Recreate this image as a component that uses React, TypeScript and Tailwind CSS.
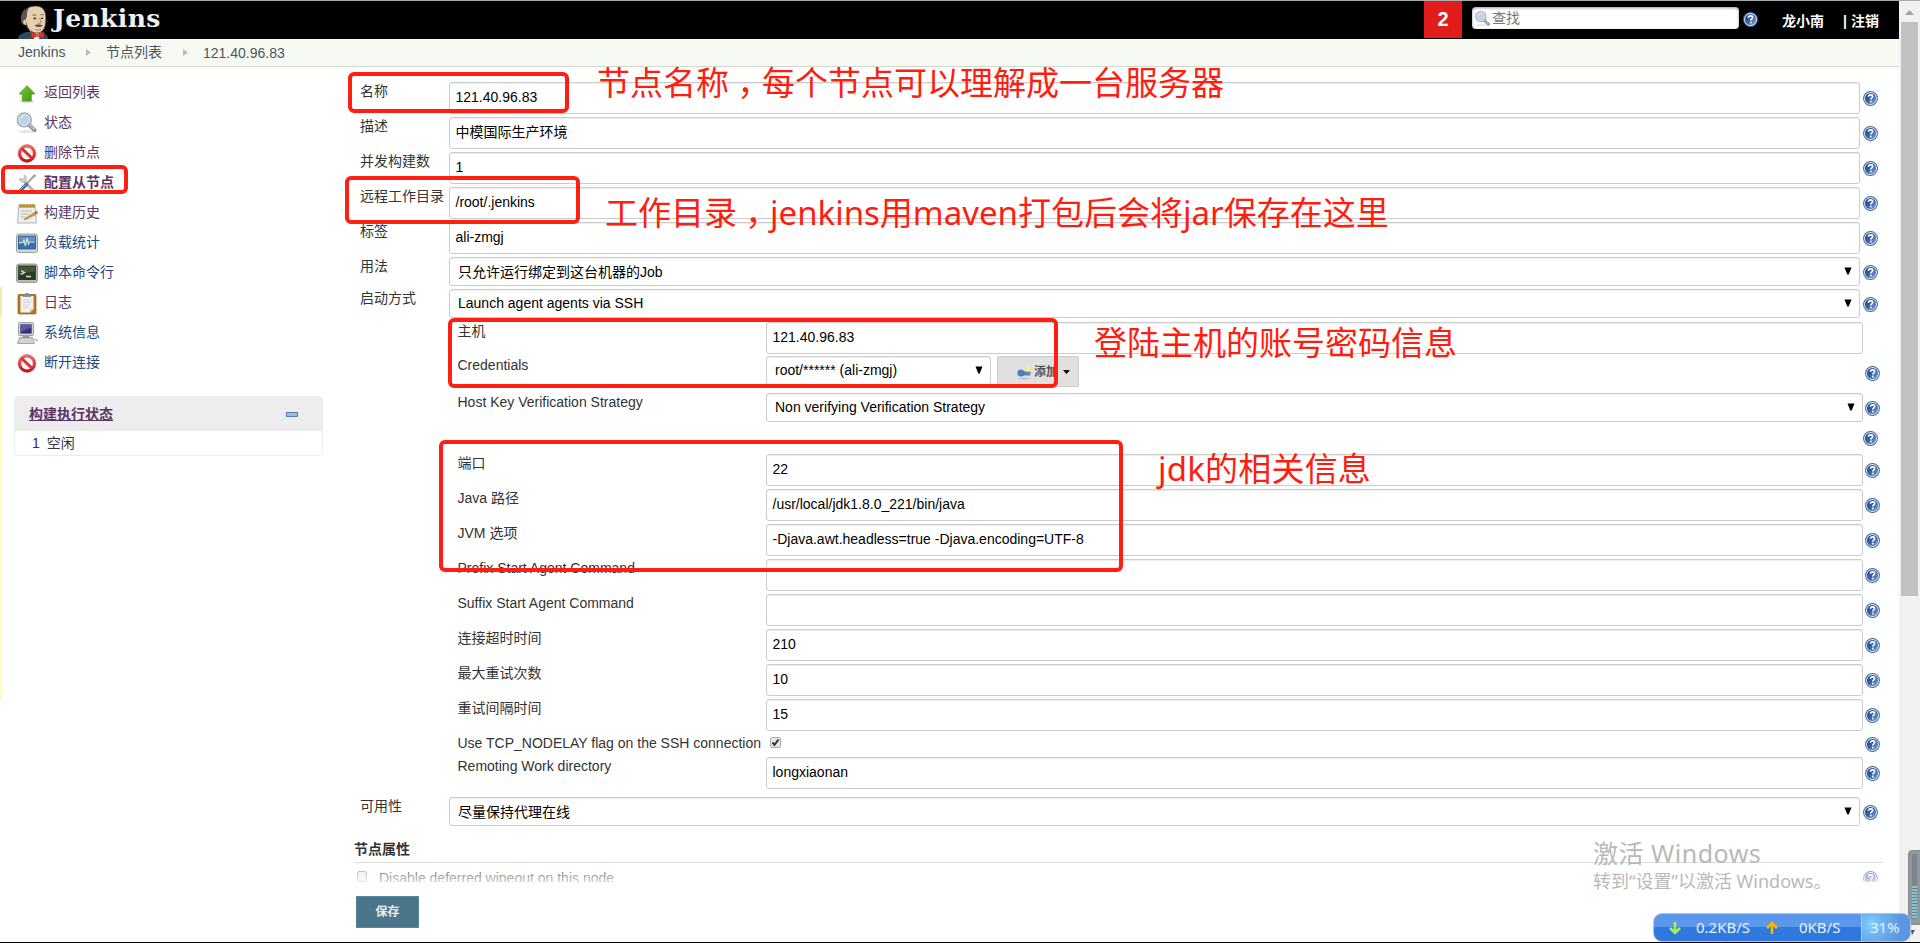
import React from "react";

type RowProps = {
  label?: string;
  height: string;
  nested?: boolean;
  help?: "none" | "text" | "select" | "cred" | "check";
  children?: React.ReactNode;
};

function Help() {
  return (
    <svg width="15" height="15" viewBox="0 0 16 16" className="block shrink-0">
      <defs>
        <linearGradient id="helpFill" x1="0" y1="0" x2="1" y2="1">
          <stop offset="0" stopColor="#1d4480" />
          <stop offset="0.5" stopColor="#3563a5" />
          <stop offset="1" stopColor="#86a9d8" />
        </linearGradient>
      </defs>
      <circle cx="8" cy="8" r="7.9" fill="#3f66a2" />
      <circle cx="8" cy="8" r="6.9" fill="#dfe8f4" />
      <circle cx="8" cy="8" r="5.9" fill="url(#helpFill)" />
      <path d="M5.8 6.2C5.9 4.7 6.9 4.1 8.1 4.1c1.3 0 2.2.7 2.2 1.8 0 1.5-2 1.6-2 3.2" fill="none" stroke="#fff" strokeWidth="1.7" />
      <rect x="7.4" y="10.3" width="1.8" height="1.8" fill="#fff" />
    </svg>
  );
}

const helpTop = {
  none: "",
  text: "pt-[9px]",
  select: "pt-[8px]",
  cred: "pt-[10px]",
  check: "pt-[3px]",
};

function Row({ label, height, nested, help = "text", children }: RowProps) {
  return (
    <div className={`flex items-start ${height} ${nested ? "pl-[97.500px]" : ""}`}>
      <div className={`shrink-0 whitespace-nowrap leading-[18px] text-[#333] ${nested ? "w-[308.500px]" : "w-[89px]"}`}>{label}</div>
      <div className={`flex shrink-0 ${nested ? "w-[1097px]" : "w-[1411px]"}`}>{children}</div>
      {help !== "none" && (
        <div className={`${nested ? "pl-[2px]" : "pl-[3px]"} ${helpTop[help]}`}>
          <Help />
        </div>
      )}
    </div>
  );
}

function Input({ value }: { value: string }) {
  return (
    <div className="h-[32px] flex-1 rounded-[3px] border border-[#ccc] bg-white px-[5.5px] leading-[29px] whitespace-pre text-black shadow-[inset_0_1px_1px_rgba(0,0,0,0.075)]">
      {value}
    </div>
  );
}

function Select({ value, small, leading = "leading-[29px]" }: { value: string; small?: boolean; leading?: string }) {
  return (
    <div
      className={`flex h-[29px] items-start justify-between rounded-[3px] border border-[#ccc] bg-white pr-[7px] pl-[8px] text-black shadow-[inset_0_1px_1px_rgba(0,0,0,0.075)] ${leading} ${small ? "w-[225px]" : "flex-1"}`}
    >
      <span>{value}</span>
      <svg width="8" height="8" viewBox="0 0 8 8" className="mt-[9px]">
        <path d="M0.5 0.5h7L4.7 7.5H3.3z" fill="#000" />
      </svg>
    </div>
  );
}

function Magnifier({ size }: { size: number }) {
  return (
    <svg width={size} height={size} viewBox="0 0 24 24">
      <ellipse cx="12" cy="21.5" rx="9" ry="1.6" fill="#000" opacity=".1" />
      <path d="M14.5 14.5l6 5.5" stroke="#8a8c88" strokeWidth="4" strokeLinecap="round" />
      <path d="M15.5 15l4.6 4.2" stroke="#c3c5c1" strokeWidth="1.6" strokeLinecap="round" />
      <circle cx="9.7" cy="9.3" r="7" fill="#b9d3f2" stroke="#a9aba8" strokeWidth="2" />
      <circle cx="9.7" cy="9.3" r="5.8" fill="none" stroke="#e7f0fa" strokeWidth="1" />
      <path d="M5.5 8.5c.5-2.500 2.500-3.800 5-3.500-2 .6-3.500 1.800-5 3.500z" fill="#fff" />
    </svg>
  );
}

function NoEntry() {
  return (
    <svg width="24" height="24" viewBox="0 0 24 24">
      <defs>
        <linearGradient id="noEntry" x1="0" y1="0" x2="0" y2="1">
          <stop offset="0" stopColor="#ea6a6a" />
          <stop offset="1" stopColor="#cc1414" />
        </linearGradient>
      </defs>
      <circle cx="12" cy="12.500" r="7.400" fill="#f6f6f6" stroke="url(#noEntry)" strokeWidth="3" />
      <path d="M6.800 7.500l10.500 10" stroke="#d93030" strokeWidth="3" />
      <circle cx="12" cy="12.500" r="9" fill="none" stroke="#b81414" strokeWidth=".5" opacity=".6" />
    </svg>
  );
}

const icons: Record<string, React.ReactNode> = {
  up: (
    <svg width="24" height="24" viewBox="0 0 24 24">
      <defs>
        <linearGradient id="upFill" x1="0" y1="0" x2="1" y2="1">
          <stop offset="0" stopColor="#7ccb3a" />
          <stop offset="1" stopColor="#3f9410" />
        </linearGradient>
      </defs>
      <ellipse cx="12" cy="20.500" rx="7.500" ry="1.500" fill="#000" opacity=".15" />
      <path d="M12 4.500L20 13h-3.700v7H7.200v-7H4z" fill="url(#upFill)" stroke="#4c9a1c" strokeWidth=".7" />
    </svg>
  ),
  search: <Magnifier size={23} />,
  no: <NoEntry />,
  tools: (
    <svg width="24" height="24" viewBox="0 0 24 24">
      <path d="M8 9l10.500 11" stroke="#b4b6b3" strokeWidth="3.200" strokeLinecap="round" />
      <path d="M4.300 7.200c0 2.700 2 4.300 4.300 3.900 2-.3 3.200-2 2.900-4-.2-1.700-1.200-2.900-2.700-3.300L9.700 6.800 7.400 8.300z" fill="#d0d2cf" stroke="#a9aba8" strokeWidth=".6" />
      <path d="M19.800 4L11.500 13" stroke="#a3a5a2" strokeWidth="2" />
      <path d="M20.500 3.500l-2.300 1.200-1 1.500 1.200 1 2-1.300 1-2z" fill="#8faacb" />
      <path d="M11.300 13.500L5 20" stroke="#3f6fae" strokeWidth="3.400" strokeLinecap="round" />
      <path d="M10.500 13.500L5 19" stroke="#8fb2df" strokeWidth="1" />
    </svg>
  ),
  note: (
    <svg width="24" height="24" viewBox="0 0 24 24">
      <path d="M4 4h16l1.300 18H2.500z" fill="#eeeeec" stroke="#aaa" strokeWidth=".9" />
      <path d="M4 3.500h16v3.300H4z" fill="#c2a434" />
      <path d="M6 3.500v2M9 3.500v2M12 3.500v2M15 3.500v2M18 3.500v2" stroke="#765e10" strokeWidth=".7" />
      <path d="M6 10h11M6 13h8M5.500 16h5" stroke="#b8b8b6" />
      <path d="M10 17.500l9.500-6 1.500 1.800-9.300 4.800-2.700.6z" fill="#e0a23a" stroke="#99671c" strokeWidth=".6" />
      <path d="M19.200 11.600l2.300-1.800 1.800 1.700-2.200 1.900z" fill="#dd5a48" />
    </svg>
  ),
  monitor: (
    <svg width="24" height="24" viewBox="0 0 24 24">
      <rect x="1.500" y="3" width="21" height="18.500" rx="2.500" fill="#d3d7cf" stroke="#888a85" strokeWidth=".8" />
      <rect x="3.500" y="5" width="17" height="13" fill="#3b6fb5" stroke="#204a87" strokeWidth=".7" />
      <path d="M4 5.500h16v4c-6 .500-11 2-16 4z" fill="#7ba3d8" opacity=".6" />
      <path d="M4 11.500h4l1-2.500 1.500 6 1.700-8 1.300 6 1-2h5.500" fill="none" stroke="#d5efd8" strokeWidth="1.100" />
    </svg>
  ),
  terminal: (
    <svg width="24" height="24" viewBox="0 0 24 24">
      <rect x="1.500" y="3" width="21" height="18.500" rx="2.500" fill="#babdb6" stroke="#888a85" strokeWidth=".8" />
      <rect x="3.700" y="5" width="16.600" height="13.500" fill="#2a3c20" stroke="#1b2416" strokeWidth=".8" />
      <path d="M4 5.500h16v5c-6 0-11 2-16 4z" fill="#5b7350" opacity=".5" />
      <path d="M6 9.500l3.500 2L6 13.300M11 15.500h5" fill="none" stroke="#dfe8da" strokeWidth="1.300" />
    </svg>
  ),
  clipboard: (
    <svg width="24" height="24" viewBox="0 0 24 24">
      <rect x="3" y="3.500" width="18" height="19.500" rx="1" fill="#b7772a" stroke="#8f5902" strokeWidth=".7" />
      <path d="M5.500 5h13v13l-3.500 3.500H5.500z" fill="#f1f1ef" />
      <path d="M18.500 18L15 21.500V18z" fill="#c9c9c6" />
      <path d="M8 9h8M8 11.500h8M8 14h7M8 16.500h6" stroke="#ccc" strokeWidth=".8" />
      <path d="M8 5.500V3.500h2c.3-1.600 3.700-1.600 4 0h2v2z" fill="#8d908a" stroke="#6b6d69" strokeWidth=".5" />
    </svg>
  ),
  computer: (
    <svg width="24" height="24" viewBox="0 0 24 24">
      <rect x="3.500" y="1.500" width="15" height="13" rx="1" fill="#d3d3d3" stroke="#8f8f8f" strokeWidth=".8" />
      <rect x="5.300" y="3.300" width="11.400" height="9.300" fill="#34347c" />
      <path d="M5.300 3.300h11.400v3l-11.400 5z" fill="#7a7ab6" opacity=".55" />
      <path d="M7.500 14.500h7v3h-7z" fill="#999" />
      <path d="M4.500 16.500h13l2 6H2.500z" fill="#c2c2c2" stroke="#8c8c8c" strokeWidth=".7" />
      <path d="M4.500 19h13.500M4 21h15" stroke="#f4f4f4" strokeWidth=".7" />
      <path d="M19.500 18.500c1.800-.3 2.800.5 2.600 1.700" fill="none" stroke="#aaa" strokeWidth="1.500" />
    </svg>
  ),
};

const tasks = [
  { icon: "up", text: "返回列表", visited: true },
  { icon: "search", text: "状态", visited: true },
  { icon: "no", text: "删除节点", visited: true },
  { icon: "tools", text: "配置从节点", visited: true, current: true },
  { icon: "note", text: "构建历史", visited: true },
  { icon: "monitor", text: "负载统计" },
  { icon: "terminal", text: "脚本命令行" },
  { icon: "clipboard", text: "日志", visited: true },
  { icon: "computer", text: "系统信息" },
  { icon: "no", text: "断开连接" },
];

function Butler() {
  return (
    <svg width="32" height="34" viewBox="0 0 32 34" className="shrink-0">
      <path d="M1 34c0-4 4-6 9-7l13 0c5 1 8 3 8 7z" fill="#2b4a5e" />
      <path d="M12 24l5 10h5l3-9z" fill="#f2f2f2" />
      <path d="M7 12C7 4 12 1 19 1c6 0 9.500 4 9.800 10 .2 5 .2 9-1.800 13-2 3.500-7 5-11 3.500-4-1.500-6-5-6.500-8.500z" fill="#e8cdae" stroke="#4a3a30" strokeWidth=".8" />
      <path d="M12 2.500C6 4 3.500 9 4 15c.2 2 1 4 2.500 5l2.800-1.500c-1-3-.5-5 .7-7C9.500 8 10.500 5 12 2.500z" fill="#5a5552" />
      <path d="M8.500 14.500c-2-.5-3 1-2.500 3s2 3 3.500 2.500" fill="#e8cdae" stroke="#6b5140" strokeWidth=".6" />
      <path d="M15.500 10.500c1-1 2.500-1 3.500 0M23.500 10c1-.8 2-.8 3 0" fill="none" stroke="#54423a" strokeWidth=".9" />
      <path d="M16.500 13.500h2.500M24 13.300h2" stroke="#2d2420" strokeWidth="1.300" />
      <path d="M22 13c1.500 2 2.800 3.500 1.500 5-.8.700-2 .5-2.800 0" fill="none" stroke="#a07a5c" strokeWidth=".9" />
      <path d="M17.500 20.500c2-1.500 6-1.500 8.500 0-1.500 1.800-6.500 2-8.500 0z" fill="#5c4b43" />
      <path d="M18 24.300c2 .9 4 .9 6 0" fill="none" stroke="#9c6d55" strokeWidth=".8" />
      <path d="M14 26.500l6 3 7-3v7.500l-7-3-6 3z" fill="#d33833" stroke="#7c1713" strokeWidth=".6" />
      <circle cx="20.300" cy="30.300" r="1.700" fill="#f05a50" />
    </svg>
  );
}

function Note({ className, children }: { className: string; children: React.ReactNode }) {
  return (
    <div className={`absolute whitespace-nowrap font-['Noto_Sans','Noto_Sans_CJK_SC',sans-serif] text-[33px] leading-[40px] text-[#ff1d10] ${className}`}>
      {children}
    </div>
  );
}

function Comma() {
  return <span className="inline-block w-[33px] text-center [font-feature-settings:'halt']">，</span>;
}

function Frame({ className }: { className: string }) {
  return <div className={`absolute rounded-[6px] border-[4px] border-[#ff1f12] ${className}`} />;
}

function Crumb() {
  return (
    <svg width="5" height="7" viewBox="0 0 5 7" className="shrink-0">
      <path d="M0 0l5 3.500-5 3.500z" fill="#bbb" />
    </svg>
  );
}

export default function App() {
  return (
    <div className="relative flex h-[943px] w-[1920px] flex-col overflow-hidden border-b border-black bg-white font-['Liberation_Sans','Noto_Sans_CJK_SC',sans-serif] text-[14px] text-[#333]">
      <div className="flex min-h-0 flex-1">
        <div className="flex w-[1899px] flex-col">
          <header className="flex h-[39px] items-start border-t border-[#aaa] bg-black pl-[17px]">
            <div className="flex w-[1407px] items-start overflow-hidden">
              <div className="h-[38px] overflow-hidden pt-[4px]">
                <Butler />
              </div>
              <span className="ml-[4px] pt-[1px] font-['DejaVu_Serif',serif] text-[25px] leading-[34px] font-bold tracking-[0.4px] text-[#f0f0f0]">Jenkins</span>
            </div>
            <div className="h-[37px] w-[38px] bg-[#e21b1b] text-center text-[20px] leading-[37px] font-bold text-white">2</div>
            <div className="mt-[6px] ml-[10px] flex h-[22px] w-[267px] items-center rounded-[4px] bg-white pl-[2px] text-[#757575] shadow-[inset_0_1px_3px_rgba(0,0,0,0.4)]">
              <Magnifier size={17} />
              <span className="ml-[1px] leading-[20px]">查找</span>
            </div>
            <div className="mt-[11px] ml-[4px]">
              <Help />
            </div>
            <span className="mt-[10px] ml-[24px] leading-[20px] font-bold text-white">龙小南</span>
            <span className="mt-[10px] ml-[19px] leading-[20px] font-bold text-white">|</span>
            <span className="mt-[10px] ml-[4px] leading-[20px] font-bold text-white">注销</span>
          </header>

          <nav className="flex h-[28px] items-center border-b border-[#d3d7cf] bg-[#f6faf2] pl-[18px] text-[#4d545d]">
            <span className="w-[68px]">Jenkins</span>
            <Crumb />
            <span className="w-[77px] pl-[15px]">节点列表</span>
            <span className="flex w-[20px] justify-end">
              <Crumb />
            </span>
            <span className="pt-[1px] pl-[15px]">121.40.96.83</span>
          </nav>

          <div className="flex min-h-0 flex-1">
            <aside className="w-[354px] shrink-0 pt-[10px] pl-[14px]">
              {tasks.map((t, i) => (
                <div key={i} className="flex h-[30px] items-start pl-px">
                  <div className="w-[24px] pt-[4px]">{icons[t.icon]}</div>
                  <span className={`pt-[5px] pl-[5px] leading-[20px] ${t.visited ? "text-[#5c3566]" : "text-[#204a87]"} ${t.current ? "font-bold" : ""}`}>{t.text}</span>
                </div>
              ))}
              <div className="mt-[19px] w-[309px] overflow-hidden rounded-[4px] border border-[#ededed]">
                <div className="flex h-[34px] items-center justify-between bg-[#ededed] pr-[24px] pl-[14px]">
                  <span className="font-bold text-[#5c3566] underline">构建执行状态</span>
                  <div className="h-[5px] w-[12px] border border-[#5580b5] bg-[#9dbbe0]" />
                </div>
                <div className="flex h-[24px] items-center gap-[7px] pl-[17px]">
                  <span>1</span>
                  <span>空闲</span>
                </div>
              </div>
            </aside>

            <main className="flex w-[1545px] flex-col pt-[15px]">
              <div className="flex flex-col pl-[6px]">
                <Row label="名称" height="h-[35px]">
                  <Input value="121.40.96.83" />
                </Row>
                <Row label="描述" height="h-[35px]">
                  <Input value="中模国际生产环境" />
                </Row>
                <Row label="并发构建数" height="h-[35px]">
                  <Input value="1" />
                </Row>
                <Row label="远程工作目录" height="h-[35px]">
                  <Input value="/root/.jenkins" />
                </Row>
                <Row label="标签" height="h-[35px]">
                  <Input value="ali-zmgj" />
                </Row>
                <Row label="用法" height="h-[32px]" help="select">
                  <Select value="只允许运行绑定到这台机器的Job" />
                </Row>
                <Row label="启动方式" height="h-[33px]" help="select">
                  <Select value="Launch agent agents via SSH" leading="leading-[26px]" />
                </Row>
                <Row nested label="主机" height="h-[34px]" help="none">
                  <Input value="121.40.96.83" />
                </Row>
                <Row nested label="Credentials" height="h-[37px]" help="cred">
                  <Select small value="root/****** (ali-zmgj)" leading="leading-[26px]" />
                  <div className="ml-[6px] flex h-[31px] w-[82px] items-center rounded-[1px] border border-[#ccc] bg-[#e0e0e0] pl-[19px] text-[12px] font-bold text-[#4d545d]">
                    <svg width="15" height="14" viewBox="0 0 15 14" className="mt-[2px]">
                      <ellipse cx="7" cy="12.500" rx="6" ry="1" fill="#000" opacity=".12" />
                      <path d="M6 5.500h7.500v4H6z" fill="#5d89bd" />
                      <circle cx="4" cy="7" r="3.600" fill="#4d7fbe" />
                      <circle cx="11.500" cy="3" r="2.600" fill="#f7ef85" />
                    </svg>
                    <span className="ml-[2px]">添加</span>
                    <svg width="7" height="4" viewBox="0 0 7 4" className="ml-[5px]">
                      <path d="M0 0h7L3.500 4z" fill="#000" />
                    </svg>
                  </div>
                </Row>
                <Row nested label="Host Key Verification Strategy" height="h-[38px]" help="select">
                  <Select value="Non verifying Verification Strategy" leading="leading-[26px]" />
                </Row>
                <div className="flex h-[23px] pl-[1503px]">
                  <Help />
                </div>
                <Row nested label="端口" height="h-[35px]">
                  <Input value="22" />
                </Row>
                <Row nested label="Java 路径" height="h-[35px]">
                  <Input value="/usr/local/jdk1.8.0_221/bin/java" />
                </Row>
                <Row nested label="JVM 选项" height="h-[35px]">
                  <Input value="-Djava.awt.headless=true -Djava.encoding=UTF-8" />
                </Row>
                <Row nested label="Prefix Start Agent Command" height="h-[35px]">
                  <Input value="" />
                </Row>
                <Row nested label="Suffix Start Agent Command" height="h-[35px]">
                  <Input value="" />
                </Row>
                <Row nested label="连接超时时间" height="h-[35px]">
                  <Input value="210" />
                </Row>
                <Row nested label="最大重试次数" height="h-[35px]">
                  <Input value="10" />
                </Row>
                <Row nested label="重试间隔时间" height="h-[35px]">
                  <Input value="15" />
                </Row>
                <Row nested label="Use TCP_NODELAY flag on the SSH connection" height="h-[23px]" help="check">
                  <div className="mt-[3px] ml-[4px] h-[11px] w-[11px] rounded-[2px] border border-[#aaa] bg-[#e8e8e8]">
                    <svg width="9" height="9" viewBox="0 0 9 9">
                      <path d="M1.500 4.500l2 2.300L7.500 1.500" fill="none" stroke="#333" strokeWidth="2" />
                    </svg>
                  </div>
                </Row>
                <Row nested label="Remoting Work directory" height="h-[40px]">
                  <Input value="longxiaonan" />
                </Row>
                <Row label="可用性" height="h-[42px]" help="select">
                  <Select value="尽量保持代理在线" />
                </Row>
              </div>
              <div className="h-[24px] w-[1529px] border-b border-[#ddd] leading-[20px] font-bold text-[#333]">节点属性</div>
              <div className="relative flex h-[19px] items-start overflow-hidden pt-[6px] pl-[3px]">
                <div className="mt-[2px] h-[11px] w-[10px] shrink-0 rounded-[2px] border border-[#999] bg-[#e8e8e8]" />
                <span className="w-[1496px] pl-[12px] leading-[18px]">Disable deferred wipeout on this node</span>
                <div className="pt-[2px]">
                  <Help />
                </div>
                <div className="absolute inset-0 bg-linear-to-b from-white/10 to-white/75" />
              </div>
              <div className="mt-[14px] ml-[2px] flex h-[32px] w-[63px] items-center justify-center border border-[#5588a0] bg-[#4b758b] text-[12px] font-bold text-[#eee]">保存</div>
            </main>
          </div>
        </div>

        <div className="flex w-[21px] flex-col items-start border-t border-[#aaa] bg-[#f1f1f1] pl-[2px]">
          <div className="flex h-[21px] w-[17px] items-center justify-center pt-[2px]">
            <svg width="9" height="5" viewBox="0 0 9 5">
              <path d="M4.500 0L9 5H0z" fill="#a3a3a3" />
            </svg>
          </div>
          <div className="h-[574px] w-[17px] bg-[#c1c1c1]" />
        </div>
      </div>

      <div className="absolute top-[287px] left-0 h-[413px] w-[2px] bg-[#fffbb8]">
        <div className="h-[28px] bg-[#efebaa]" />
      </div>

      <Frame className="top-[165px] left-[1px] h-[29px] w-[127px]" />
      <Frame className="top-[72px] left-[348px] h-[41px] w-[221px]" />
      <Frame className="top-[176px] left-[345px] h-[48px] w-[235px]" />
      <Frame className="top-[318px] left-[448px] h-[70px] w-[610px]" />
      <Frame className="top-[440px] left-[439px] h-[132px] w-[684px]" />

      <Note className="top-[63px] left-[597px]">
        节点名称
        <Comma />
        每个节点可以理解成一台服务器
      </Note>
      <Note className="top-[193px] left-[605px]">
        工作目录
        <Comma />
        jenkins用maven打包后会将jar保存在这里
      </Note>
      <Note className="top-[323px] left-[1094px]">登陆主机的账号密码信息</Note>
      <Note className="top-[449px] left-[1158px] tracking-[0.2px]">jdk的相关信息</Note>

      <div className="absolute top-[835px] left-[1593px] font-['Noto_Sans','Noto_Sans_CJK_SC',sans-serif] leading-[36px] whitespace-nowrap text-[#b9b9b9]">
        <div className="text-[25px] tracking-[0.5px]">激活 Windows</div>
        <div className="mt-[-8px] text-[18px]">转到“设置”以激活 Windows。</div>
      </div>

      <div className="absolute top-[850px] left-[1908px] flex h-[75px] w-[14px] items-end rounded-tl-[4px] border border-[#8a8e92] bg-[#92979b] pb-[5px] pl-[3px]">
        <div className="flex h-[65px] w-[5px] flex-col justify-end bg-[#7e848a]">
          <div className="h-[33px] bg-[repeating-linear-gradient(to_bottom,#8fc0d0_0px,#8fc0d0_2px,#5f8790_2px,#5f8790_3px)]" />
        </div>
      </div>
      <svg width="4" height="5" viewBox="0 0 4 5" className="absolute top-[930px] left-[1911px]">
        <path d="M0 0h4L1 5z" fill="#505050" />
      </svg>

      <div className="absolute top-[913px] left-[1653px] flex h-[29px] w-[258px] items-center overflow-hidden rounded-[9px] border border-[#b5c3d6] bg-[linear-gradient(to_bottom,#5b97ea_0%,#5b97ea_50%,#2f78de_50%,#2f78de_100%)] font-['Noto_Sans',sans-serif] text-[15px] text-[#e8f1ff]">
        <svg width="14" height="14" viewBox="0 0 14 14" className="ml-[14px] shrink-0">
          <path d="M7 1v11M2 7l5 5 5-5" fill="none" stroke="#a5ee5c" strokeWidth="2.600" />
        </svg>
        <span className="w-[83px] shrink-0 pl-[14px] whitespace-nowrap">0.2KB/S</span>
        <svg width="14" height="14" viewBox="0 0 14 14" className="shrink-0">
          <path d="M7 13V2M2 7l5-5 5 5" fill="none" stroke="#ffb400" strokeWidth="2.600" />
        </svg>
        <span className="w-[82px] shrink-0 pl-[20px] whitespace-nowrap">0KB/S</span>
        <div className="flex h-full flex-1 items-center border-l border-[#a9cdf5] bg-[radial-gradient(circle_at_20%_40%,#7fd4fb_0%,#6fb0ee_30%,#5a98e4_70%)] pl-[8px]">31%</div>
      </div>
    </div>
  );
}
